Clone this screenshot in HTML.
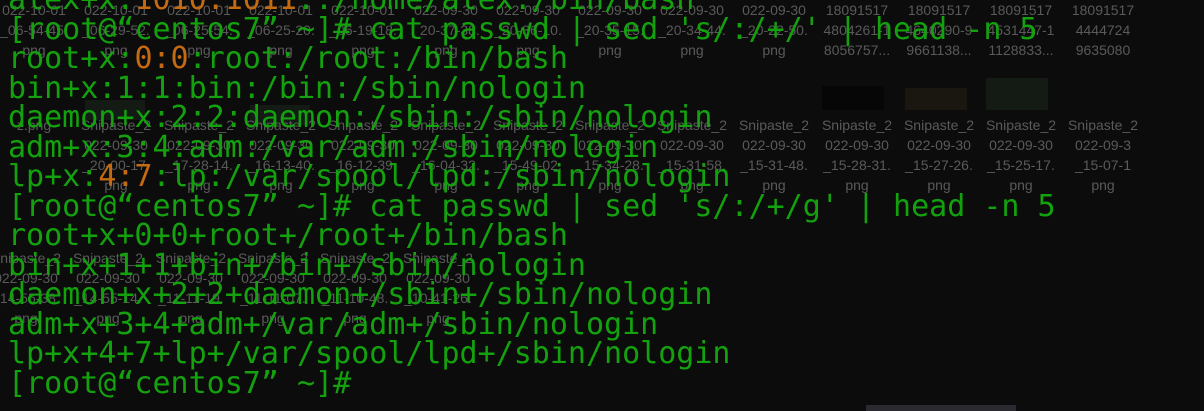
<!DOCTYPE html>
<html><head><meta charset="utf-8"><style>
html,body{margin:0;padding:0;width:1204px;height:411px;overflow:hidden;background:#0c0c0c;}
.bg{position:absolute;left:0;top:0;width:1204px;height:411px;}
.c{position:absolute;width:82px;text-align:center;font:14px/20px "Liberation Sans",sans-serif;color:#5a5a5a;white-space:nowrap;overflow:hidden;}
.th{position:absolute;height:20px;background:#141a14;}
pre{position:absolute;left:8px;top:-15px;margin:0;font:30px/29.5px "DejaVu Sans Mono","Liberation Mono",monospace;color:#13a10e;white-space:pre;}
.o{color:#c46a10;}
.bar{position:absolute;left:866px;top:405px;width:150px;height:6px;background:#2b2a30;}
</style></head><body>
<div class="bg">
<div class="c" style="left:-7px;top:0">022-10-01<br>_06-54-45.<br>png</div>
<div class="c" style="left:75px;top:0">022-10-01<br>_06-29-52.<br>png</div>
<div class="c" style="left:158px;top:0">022-10-01<br>_06-25-54.<br>png</div>
<div class="c" style="left:240px;top:0">022-10-01<br>_06-25-20.<br>png</div>
<div class="c" style="left:322px;top:0">022-10-01<br>_06-19-18.<br>png</div>
<div class="c" style="left:405px;top:0">022-09-30<br>_20-37-38.<br>png</div>
<div class="c" style="left:487px;top:0">022-09-30<br>_20-36-10.<br>png</div>
<div class="c" style="left:569px;top:0">022-09-30<br>_20-35-15.<br>png</div>
<div class="c" style="left:651px;top:0">022-09-30<br>_20-34-44.<br>png</div>
<div class="c" style="left:733px;top:0">022-09-30<br>_20-22-50.<br>png</div>
<div class="c" style="left:816px;top:0">18091517<br>4804261-1<br>8056757...</div>
<div class="c" style="left:898px;top:0">18091517<br>4640290-9<br>9661138...</div>
<div class="c" style="left:980px;top:0">18091517<br>4531447-1<br>1128833...</div>
<div class="c" style="left:1062px;top:0">18091517<br>4444724<br>9635080</div>
<div class="th" style="left:85px;top:100px;width:60px"></div>
<div class="th" style="left:250px;top:105px;width:60px"></div>
<div class="th" style="left:822px;top:86px;width:62px;height:24px;background:#060606"></div>
<div class="th" style="left:905px;top:88px;width:62px;height:22px;background:#1a1610"></div>
<div class="th" style="left:986px;top:78px;width:62px;height:32px"></div>
<div class="c" style="left:-7px;top:115px">z.png</div>
<div class="c" style="left:75px;top:115px">Snipaste_2<br>022-09-30<br>_20-00-17.<br>png</div>
<div class="c" style="left:158px;top:115px">Snipaste_2<br>022-09-30<br>_17-28-14.<br>png</div>
<div class="c" style="left:240px;top:115px">Snipaste_2<br>022-09-30<br>_16-13-40.<br>png</div>
<div class="c" style="left:322px;top:115px">Snipaste_2<br>022-09-30<br>_16-12-39.<br>png</div>
<div class="c" style="left:405px;top:115px">Snipaste_2<br>022-09-30<br>_16-04-32.<br>png</div>
<div class="c" style="left:487px;top:115px">Snipaste_2<br>022-09-30<br>_15-49-02.<br>png</div>
<div class="c" style="left:569px;top:115px">Snipaste_2<br>022-09-30<br>_15-34-28.<br>png</div>
<div class="c" style="left:651px;top:115px">Snipaste_2<br>022-09-30<br>_15-31-58.<br>png</div>
<div class="c" style="left:733px;top:115px">Snipaste_2<br>022-09-30<br>_15-31-48.<br>png</div>
<div class="c" style="left:816px;top:115px">Snipaste_2<br>022-09-30<br>_15-28-31.<br>png</div>
<div class="c" style="left:898px;top:115px">Snipaste_2<br>022-09-30<br>_15-27-26.<br>png</div>
<div class="c" style="left:980px;top:115px">Snipaste_2<br>022-09-30<br>_15-25-17.<br>png</div>
<div class="c" style="left:1062px;top:115px">Snipaste_2<br>022-09-3<br>_15-07-1<br>png</div>
<div class="c" style="left:-15px;top:248px">Snipaste_2<br>022-09-30<br>_14-55-38.<br>png</div>
<div class="c" style="left:67px;top:248px">Snipaste_2<br>022-09-30<br>_14-55-14.<br>png</div>
<div class="c" style="left:150px;top:248px">Snipaste_2<br>022-09-30<br>_11-11-19.<br>png</div>
<div class="c" style="left:232px;top:248px">Snipaste_2<br>022-09-30<br>_11-11-07.<br>png</div>
<div class="c" style="left:314px;top:248px">Snipaste_2<br>022-09-30<br>_11-10-48.<br>png</div>
<div class="c" style="left:397px;top:248px">Snipaste_2<br>022-09-30<br>_10-41-26.<br>png</div>
</div>
<pre>alex+x:<span class="o">1010:1011</span>::/home/alex:/bin/bash
[root@“centos7” ~]# cat passwd | sed 's/:/+/' | head -n 5
root+x:<span class="o">0:0</span>:root:/root:/bin/bash
bin+x:1:1:bin:/bin:/sbin/nologin
daemon+x:2:2:daemon:/sbin:/sbin/nologin
adm+x:3:4:adm:/var/adm:/sbin/nologin
lp+x:<span class="o">4:7</span>:lp:/var/spool/lpd:/sbin/nologin
[root@“centos7” ~]# cat passwd | sed 's/:/+/g' | head -n 5
root+x+0+0+root+/root+/bin/bash
bin+x+1+1+bin+/bin+/sbin/nologin
daemon+x+2+2+daemon+/sbin+/sbin/nologin
adm+x+3+4+adm+/var/adm+/sbin/nologin
lp+x+4+7+lp+/var/spool/lpd+/sbin/nologin
[root@“centos7” ~]#</pre>
<div class="bar"></div>
</body></html>
